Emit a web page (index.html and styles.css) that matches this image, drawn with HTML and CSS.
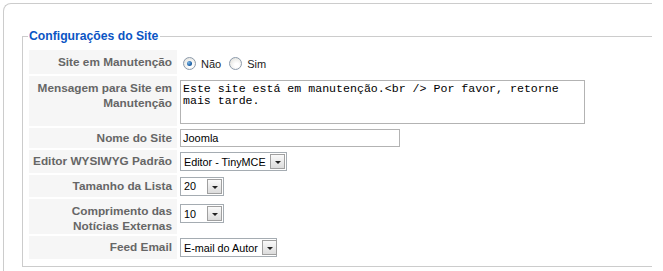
FILE: index.html
```
<!DOCTYPE html>
<html lang="pt">
<head>
  <meta charset="UTF-8">
  <title>Configurações do Site</title>
  <link rel="stylesheet" href="styles.css">
</head>
<body>
  <div class="panel">
    <fieldset class="adminform">
      <legend>Configurações do Site</legend>
      <table class="admintable">
        <tr class="r-offline">
          <td class="key">Site em Manutenção</td>
          <td class="val">
            <span class="radio on"></span><span class="rlabel">Não</span>
            <span class="radio"></span><span class="rlabel">Sim</span>
          </td>
        </tr>
        <tr class="r-msg">
          <td class="key top">Mensagem para Site em Manutenção</td>
          <td class="val top">
            <textarea class="msg" rows="3">Este site está em manutenção.&lt;br /&gt; Por favor, retorne mais tarde.</textarea>
          </td>
        </tr>
        <tr class="r-name">
          <td class="key">Nome do Site</td>
          <td class="val"><input class="text" type="text" value="Joomla"></td>
        </tr>
        <tr class="r-editor">
          <td class="key">Editor WYSIWYG Padrão</td>
          <td class="val"><span class="select w-editor"><span class="opt">Editor - TinyMCE</span><span class="btn"></span></span></td>
        </tr>
        <tr class="r-list">
          <td class="key">Tamanho da Lista</td>
          <td class="val"><span class="select w-num"><span class="opt">20</span><span class="btn"></span></span></td>
        </tr>
        <tr class="r-feed">
          <td class="key top">Comprimento das Notícias Externas</td>
          <td class="val top"><span class="select w-num"><span class="opt">10</span><span class="btn"></span></span></td>
        </tr>
        <tr class="r-mail">
          <td class="key">Feed Email</td>
          <td class="val"><span class="select w-mail"><span class="opt">E-mail do Autor</span><span class="btn"></span></span></td>
        </tr>
      </table>
    </fieldset>
  </div>
</body>
</html>
```

FILE: styles.css
```
html, body { margin: 0; padding: 0; background: #fff; overflow: hidden; }
body { font-family: "Liberation Sans", Arial, sans-serif; font-size: 11px; color: #333; }

.panel {
  margin: 3px 0 0 3px; width: 649px; height: 268px;
  border: 1px solid #ccc; border-right: 0; border-bottom: 0;
  border-top-left-radius: 8px; overflow: hidden; padding-top: 25px; box-sizing: border-box;
}

.adminform {
  margin: 0 -3px 0 18px; padding: 5px 6px 5px 6px;
  border: 1px solid #ccc;
}
.adminform legend {
  color: #0b55c4; font-size: 12.2px; font-weight: bold;
  padding: 0 2px 0 1px; line-height: 14px; margin-left: -1px;
}

.admintable { border-collapse: separate; border-spacing: 0 2px; }
.admintable td { padding: 0; vertical-align: middle; }
.admintable td.top { vertical-align: top; }
.key {
  width: 140px; padding: 0 5px 0 3px !important;
  background: #f6f6f6; color: #666; font-weight: bold; text-align: right;
  font-size: 11.8px; line-height: 15px;
}
.key.top { padding-top: 5px !important; }
.val { padding-left: 3px !important; }
.val.top { padding-top: 4px !important; }

.r-offline { height: 24px; }
.r-msg { height: 50px; }
.r-name { height: 20px; }
.r-editor { height: 23px; }
.r-list { height: 22px; }
.r-feed { height: 34px; }
.r-mail { height: 23px; }
.r-feed .val.top { padding-top: 5px !important; }

.radio {
  display: inline-block; width: 11px; height: 11px; border-radius: 50%;
  border: 1px solid #8c9aab; background: radial-gradient(circle at 60% 65%, #fff 20%, #dcdcd6 100%);
  vertical-align: middle; position: relative; margin: 2px 0 0 3px;
}
.radio.on::after {
  content: ""; position: absolute; left: 3px; top: 3px; width: 5px; height: 5px; border-radius: 50%;
  background: radial-gradient(circle at 35% 35%, #7fb8e6 0%, #1f63a8 60%, #154d86 100%);
}
.rlabel { display: inline-block; vertical-align: middle; margin: 3px 5px 0 5px; color: #222; }
.radio + .rlabel + .radio { margin-left: 0; }

.msg {
  display: block; width: 405px; height: 44px; box-sizing: border-box; margin: 0;
  border: 1px solid #b3b3b3; padding: 2px 2px; resize: none; overflow: hidden;
  font-family: "Liberation Mono", "Courier New", monospace; font-size: 11.6px; line-height: 12px; color: #000;
}

.text {
  display: block; width: 220px; height: 18px; box-sizing: border-box; margin: 0;
  border: 1px solid #b3b3b3; padding: 1px 2px; font-family: inherit; font-size: 11px; color: #000;
}

.select {
  display: inline-flex; align-items: center; gap: 4px; height: 19px; box-sizing: border-box;
  border: 1px solid #a5acb2; background: #fff; color: #000; padding: 0 1px 0 3px;
  vertical-align: middle; font-size: 10.8px;
}
.select .opt { flex: 1; white-space: nowrap; }
.select .btn {
  flex: none; width: 15px; height: 15px; box-sizing: border-box; position: relative;
  border: 1px solid #a0a0a0; background: linear-gradient(#fafafa, #dcdcdc);
}
.select .btn::after {
  content: ""; position: absolute; left: 4px; top: 6px;
  border-left: 3px solid transparent; border-right: 3px solid transparent; border-top: 3px solid #222;
}
.w-editor { width: 107px; }
.w-num { width: 44px; }
.w-mail { width: 97px; }
```
